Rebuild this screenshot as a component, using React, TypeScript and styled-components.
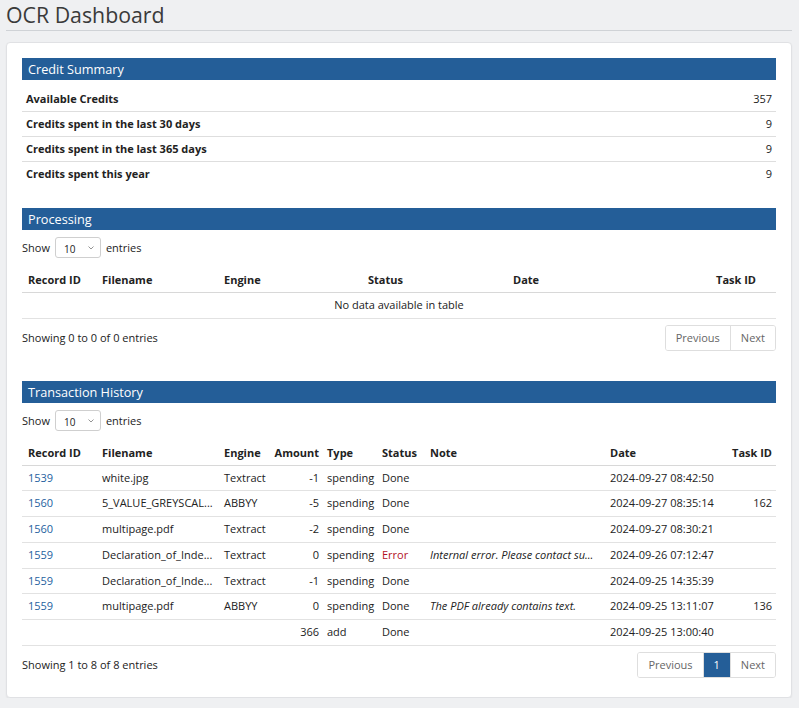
import * as React from 'react'
import styled, { createGlobalStyle } from 'styled-components'

const GlobalStyle = createGlobalStyle`
  html, body {
    margin: 0;
    padding: 0;
    background: #eff0f2;
  }
  body {
    font-family: 'Open Sans', 'Liberation Sans', sans-serif;
    font-size: 11px;
    color: #222;
  }
  *, *::before, *::after {
    box-sizing: border-box;
  }
`

const Page = styled.div`
  padding: 0 7px 0 6px;
`

const Title = styled.h1`
  margin: 0;
  font-size: 21.3px;
  font-weight: 400;
  color: #3a3a3a;
  line-height: 29px;
  height: 31px;
  border-bottom: 1px solid #cfd2d6;
`

const Card = styled.div`
  margin-top: 11px;
  background: #fff;
  border: 1px solid #e0e1e4;
  border-radius: 4px;
  box-shadow: 0 1px 2px rgba(0, 0, 0, 0.06);
  padding: 15px 15px 19px;
`

const Section = styled.section<{ $gap?: number }>`
  margin-top: ${(p) => p.$gap || 0}px;
`

const SectionHeader = styled.div`
  background: #245e98;
  color: #fff;
  font-size: 12.7px;
  line-height: 22px;
  height: 22px;
  padding-left: 6px;
`

const SummaryTable = styled.table`
  width: 100%;
  border-collapse: collapse;
  margin-top: 7px;

  th {
    text-align: left;
    font-weight: 700;
    padding: 3px 4px;
    line-height: 18px;
  }
  td {
    text-align: right;
    padding: 3px 4px;
    line-height: 18px;
  }
  tr + tr {
    border-top: 1px solid #dedede;
  }
`

const LengthRow = styled.div`
  display: flex;
  align-items: center;
  gap: 5px;
  margin-top: 7px;
  height: 21px;
`

const SelectBox = styled.div`
  position: relative;
  width: 46px;
  height: 21px;
`

const Select = styled.select`
  appearance: none;
  width: 100%;
  height: 100%;
  border: 1px solid #cfcfcf;
  border-radius: 3px;
  background: #fff;
  font-family: inherit;
  font-size: 10px;
  color: #222;
  padding: 3px 0 0 8px;
`

const Chevron = styled.svg`
  position: absolute;
  right: 7px;
  top: 9px;
  pointer-events: none;
`

const DataTable = styled.table`
  width: 100%;
  border-collapse: collapse;
  table-layout: fixed;
  margin-top: 10px;

  th {
    font-weight: 700;
    text-align: left;
    padding: 3px 6px 4px;
    line-height: 17px;
    border-bottom: 1px solid #d8d8d8;
    white-space: nowrap;
  }
  td {
    padding: 4px 6px;
    line-height: 16.7px;
    border-bottom: 1px solid #e2e2e2;
    white-space: nowrap;
    overflow: hidden;
  }
`

const Cell = styled.td<{ $align?: string; $tone?: string; $italic?: boolean; $pr?: number }>`
  text-align: ${(p) => p.$align || 'left'};
  color: ${(p) => (p.$tone === 'link' ? '#2461a0' : p.$tone === 'error' ? '#b3121f' : '#222')};
  font-style: ${(p) => (p.$italic ? 'italic' : 'normal')};
  && {
    padding-right: ${(p) => (p.$pr !== undefined ? p.$pr : 6)}px;
  }
`

const HeadCell = styled.th<{ $w: number; $align?: string; $pr?: number }>`
  width: ${(p) => p.$w}px;
  && {
    text-align: ${(p) => p.$align || 'left'};
    padding-right: ${(p) => (p.$pr !== undefined ? p.$pr : 6)}px;
  }
`

const Footer = styled.div`
  display: flex;
  align-items: center;
  justify-content: space-between;
  margin-top: 6px;
`

const Info = styled.div`
  color: #222;
`

const Pager = styled.div`
  display: flex;
  border: 1px solid #dedede;
  border-radius: 3px;
  overflow: hidden;
  height: 26px;
`

const PageButton = styled.span<{ $active?: boolean }>`
  display: flex;
  align-items: center;
  padding: 0 10px;
  color: ${(p) => (p.$active ? '#fff' : '#666')};
  background: ${(p) => (p.$active ? '#245e98' : '#fff')};
  & + & {
    border-left: 1px solid #dedede;
  }
`

const LengthMenu: React.FC = () => (
  <LengthRow>
    <span>Show</span>
    <SelectBox>
      <Select defaultValue="10">
        <option value="10">10</option>
      </Select>
      <Chevron width="6" height="4" viewBox="0 0 6 4">
        <path d="M0.5 0.5 L3 3 L5.5 0.5" fill="none" stroke="#888" strokeWidth="0.9" />
      </Chevron>
    </SelectBox>
    <span>entries</span>
  </LengthRow>
)

const summary = [
  ['Available Credits', '357'],
  ['Credits spent in the last 30 days', '9'],
  ['Credits spent in the last 365 days', '9'],
  ['Credits spent this year', '9'],
]

const transactions = [
  ['1539', 'white.jpg', 'Textract', '-1', 'spending', 'Done', '', '2024-09-27 08:42:50', ''],
  ['1560', '5_VALUE_GREYSCAL...', 'ABBYY', '-5', 'spending', 'Done', '', '2024-09-27 08:35:14', '162'],
  ['1560', 'multipage.pdf', 'Textract', '-2', 'spending', 'Done', '', '2024-09-27 08:30:21', ''],
  ['1559', 'Declaration_of_Inde...', 'Textract', '0', 'spending', 'Error', 'Internal error. Please contact su...', '2024-09-26 07:12:47', ''],
  ['1559', 'Declaration_of_Inde...', 'Textract', '-1', 'spending', 'Done', '', '2024-09-25 14:35:39', ''],
  ['1559', 'multipage.pdf', 'ABBYY', '0', 'spending', 'Done', 'The PDF already contains text.', '2024-09-25 13:11:07', '136'],
  ['', '', '', '366', 'add', 'Done', '', '2024-09-25 13:00:40', ''],
]

const App: React.FC = () => (
  <Page>
    <GlobalStyle />
    <Title>OCR Dashboard</Title>
    <Card>
      <Section>
        <SectionHeader>Credit Summary</SectionHeader>
        <SummaryTable>
          <tbody>
            {summary.map(([label, value]) => (
              <tr key={label}>
                <th>{label}</th>
                <td>{value}</td>
              </tr>
            ))}
          </tbody>
        </SummaryTable>
      </Section>

      <Section $gap={22}>
        <SectionHeader>Processing</SectionHeader>
        <LengthMenu />
        <DataTable>
          <thead>
            <tr>
              <HeadCell $w={74}>Record ID</HeadCell>
              <HeadCell $w={122}>Filename</HeadCell>
              <HeadCell $w={144}>Engine</HeadCell>
              <HeadCell $w={145}>Status</HeadCell>
              <HeadCell $w={180}>Date</HeadCell>
              <HeadCell $w={89} $align="right" $pr={20}>Task ID</HeadCell>
            </tr>
          </thead>
          <tbody>
            <tr>
              <Cell colSpan={6} $align="center">No data available in table</Cell>
            </tr>
          </tbody>
        </DataTable>
        <Footer>
          <Info>Showing 0 to 0 of 0 entries</Info>
          <Pager>
            <PageButton>Previous</PageButton>
            <PageButton>Next</PageButton>
          </Pager>
        </Footer>
      </Section>

      <Section $gap={30}>
        <SectionHeader>Transaction History</SectionHeader>
        <LengthMenu />
        <DataTable>
          <thead>
            <tr>
              <HeadCell $w={74}>Record ID</HeadCell>
              <HeadCell $w={122}>Filename</HeadCell>
              <HeadCell $w={50}>Engine</HeadCell>
              <HeadCell $w={53} $align="right" $pr={2}>Amount</HeadCell>
              <HeadCell $w={55}>Type</HeadCell>
              <HeadCell $w={48}>Status</HeadCell>
              <HeadCell $w={180}>Note</HeadCell>
              <HeadCell $w={115}>Date</HeadCell>
              <HeadCell $w={57} $align="right" $pr={4}>Task ID</HeadCell>
            </tr>
          </thead>
          <tbody>
            {transactions.map((t, i) => (
              <tr key={i}>
                <Cell $tone="link">{t[0]}</Cell>
                <Cell>{t[1]}</Cell>
                <Cell>{t[2]}</Cell>
                <Cell $align="right" $pr={2}>{t[3]}</Cell>
                <Cell>{t[4]}</Cell>
                <Cell $tone={t[5] === 'Error' ? 'error' : undefined}>{t[5]}</Cell>
                <Cell $italic>{t[6]}</Cell>
                <Cell>{t[7]}</Cell>
                <Cell $align="right" $pr={4}>{t[8]}</Cell>
              </tr>
            ))}
          </tbody>
        </DataTable>
        <Footer>
          <Info>Showing 1 to 8 of 8 entries</Info>
          <Pager>
            <PageButton>Previous</PageButton>
            <PageButton $active>1</PageButton>
            <PageButton>Next</PageButton>
          </Pager>
        </Footer>
      </Section>
    </Card>
  </Page>
)

export default App
